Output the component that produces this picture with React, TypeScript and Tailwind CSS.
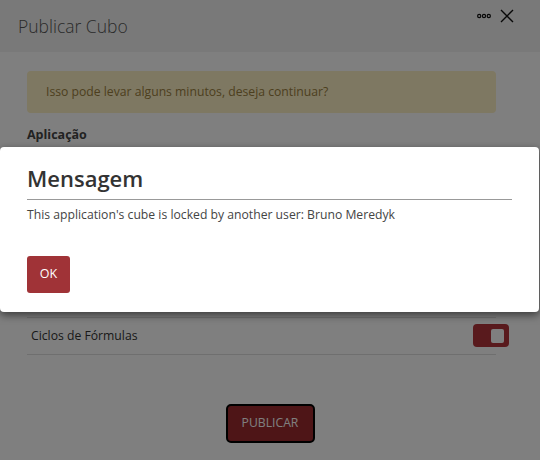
import React from "react";

export default function App() {
  return (
    <div
      className="relative h-[460px] w-[540px] overflow-hidden bg-white"
      style={{ fontFamily: '"Open Sans", "Noto Sans", sans-serif' }}
    >
      {/* background dialog */}
      <div className="flex h-full flex-col">
        <div className="flex h-[52px] items-center justify-between bg-[#f3f3f3] pl-[18px] pr-[26px]">
          <span className="text-[17.5px] font-light text-[#555]">Publicar Cubo</span>
          <div className="flex items-center gap-[9px] -mt-[20px]">
            <svg width="14" height="6" viewBox="0 0 14 6">
              <circle cx="2.2" cy="3" r="1.6" fill="none" stroke="#111" strokeWidth="1.2" />
              <circle cx="7" cy="3" r="1.6" fill="none" stroke="#111" strokeWidth="1.2" />
              <circle cx="11.8" cy="3" r="1.6" fill="none" stroke="#111" strokeWidth="1.2" />
            </svg>
            <svg width="14" height="14" viewBox="0 0 14 14">
              <path d="M1 1 L13 13 M13 1 L1 13" stroke="#111" strokeWidth="1.4" fill="none" />
            </svg>
          </div>
        </div>
        <div className="flex flex-col pl-[27px] pr-[44px] pt-[19px]">
          <div className="flex h-[42px] items-center rounded-[4px] bg-[#fdf0c4] pl-[19px] text-[12.2px] text-[#9a7f3e]">
            Isso pode levar alguns minutos, deseja continuar?
          </div>
          <div className="mt-[13px] text-[12.5px] font-bold text-[#444]">Aplicação</div>
          <div className="h-[172px]" />
          <div className="flex h-[38px] items-center justify-between border-y border-[#dedede] pl-[4px]">
            <span className="text-[12.2px] text-[#333]">Ciclos de Fórmulas</span>
            <div className="-mr-[13px] flex h-[23px] w-[36px] items-center justify-end rounded-[4px] bg-[#b3343a] pr-[5px]">
              <div className="h-[14px] w-[13px] rounded-[2px] bg-white" />
            </div>
          </div>
          <div className="mt-[49px] flex justify-center pl-[17px]">
            <button className="flex h-[39px] w-[89px] items-center justify-center rounded-[5px] border-2 border-black bg-[#9c2a2e] text-[12.2px] text-[#fff]">
              PUBLICAR
            </button>
          </div>
        </div>
      </div>

      {/* overlay */}
      <div className="absolute inset-0 bg-black/50" />

      {/* message modal */}
      <div className="absolute left-0 top-[147px] h-[165px] w-[539px] rounded-[4px] bg-white px-[27px] shadow-[0_3px_8px_rgba(0,0,0,0.55)]">
        <div className="flex h-[53px] items-end border-b border-[#999] pb-[10px]">
          <span className="text-[22px] font-semibold leading-none text-[#333]">Mensagem</span>
        </div>
        <div className="mt-[6px] text-[12.2px] text-[#444]">
          This application's cube is locked by another user: Bruno Meredyk
        </div>
        <button className="mt-[32px] flex h-[37px] w-[43px] items-center justify-center rounded-[3px] bg-[#a03337] text-[12.5px] text-white">
          OK
        </button>
      </div>
    </div>
  );
}
